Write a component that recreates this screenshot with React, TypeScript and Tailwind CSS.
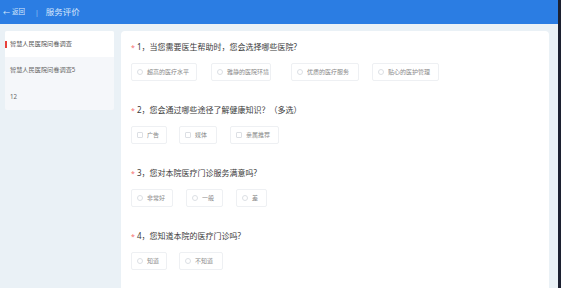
import React from "react";

type Opt = { label: string; w: string; mr: string };
type Q = { title: string; multi?: boolean; opts: Opt[] };

const questions: Q[] = [
  {
    title: "1，当您需要医生帮助时，您会选择哪些医院?",
    opts: [
      { label: "超高的医疗水平", w: "w-[66px]", mr: "mr-[14px]" },
      { label: "雅静的医院环境", w: "w-[60px]", mr: "mr-[20px]" },
      { label: "优质的医疗服务", w: "w-[68px]", mr: "mr-[13px]" },
      { label: "贴心的医护管理", w: "w-[67px]", mr: "mr-0" },
    ],
  },
  {
    title: "2，您会通过哪些途径了解健康知识？（多选）",
    multi: true,
    opts: [
      { label: "广告", w: "w-[36px]", mr: "mr-[12px]" },
      { label: "媒体", w: "w-[38px]", mr: "mr-[13px]" },
      { label: "亲属推荐", w: "w-[49px]", mr: "mr-0" },
    ],
  },
  {
    title: "3，您对本院医疗门诊服务满意吗?",
    opts: [
      { label: "非常好", w: "w-[42px]", mr: "mr-[13px]" },
      { label: "一般", w: "w-[37px]", mr: "mr-[13px]" },
      { label: "差", w: "w-[31px]", mr: "mr-0" },
    ],
  },
  {
    title: "4，您知道本院的医疗门诊吗?",
    opts: [
      { label: "知道", w: "w-[36px]", mr: "mr-[12px]" },
      { label: "不知道", w: "w-[44px]", mr: "mr-0" },
    ],
  },
];

export default function App() {
  return (
    <div
      className="w-[561px] h-[288px] overflow-hidden flex bg-[#1c2030]"
      style={{ fontFamily: '"Noto Sans", "Noto Sans CJK SC", sans-serif' }}
    >
      <div className="w-[558px] h-full flex flex-col bg-[#eaf1f6]">
        {/* header */}
        <div className="h-[24px] shrink-0 bg-[#2b7de3] flex items-center pl-[3px] text-[#d6e6fb]">
          <span className="text-[7px] leading-none mr-[2px]">←</span>
          <span className="text-[6.5px] leading-none">返回</span>
          <span className="text-[7px] leading-none ml-[10px] mr-[7px] text-[#9cc3f3]">|</span>
          <span className="text-[8.5px] leading-none">服务评价</span>
        </div>
        <div className="flex flex-1 pt-[7px] pl-[5px] pr-[9px] gap-[7px] min-h-0">
          {/* sidebar */}
          <div className="w-[109px] h-[79px] rounded-[2px] overflow-hidden flex flex-col bg-[#f5f7fa]">
            <div className="h-[26px] bg-white flex items-center relative">
              <div className="absolute left-0 top-[10px] w-[2px] h-[7px] bg-[#e8413c]" />
              <span className="pl-[5px] text-[6.2px] text-[#555] leading-none">智慧人民医院问卷调查</span>
            </div>
            <div className="h-[27px] flex items-center">
              <span className="pl-[5px] text-[6.2px] text-[#666] leading-none">智慧人民医院问卷调查5</span>
            </div>
            <div className="h-[26px] flex items-center">
              <span className="pl-[5px] text-[6.2px] text-[#666] leading-none">12</span>
            </div>
          </div>
          {/* main */}
          <div className="flex-1 bg-white rounded-t-[4px] pt-[10px] pl-[10px]">
            {questions.map((q, i) => (
              <div key={i} className="mb-[23px]">
                <div className="h-[12px] flex items-center text-[8px] text-[#3a3a3a] leading-none">
                  <span className="text-[#f56c6c] text-[7px] w-[6px]">*</span>
                  <span>{q.title}</span>
                </div>
                <div className="flex mt-[10px]">
                  {q.opts.map((o, j) => (
                    <div
                      key={j}
                      className={`${o.w} ${o.mr} h-[18px] border border-[#eef0f3] rounded-[2px] flex items-center pl-[5px]`}
                    >
                      <span
                        className={`w-[6px] h-[6px] border border-[#dcdfe4] shrink-0 ${q.multi ? "rounded-[1px]" : "rounded-full"}`}
                      />
                      <span className="ml-[4px] text-[6px] text-[#8a8a8a] leading-none whitespace-nowrap">{o.label}</span>
                    </div>
                  ))}
                </div>
              </div>
            ))}
          </div>
        </div>
      </div>
    </div>
  );
}
